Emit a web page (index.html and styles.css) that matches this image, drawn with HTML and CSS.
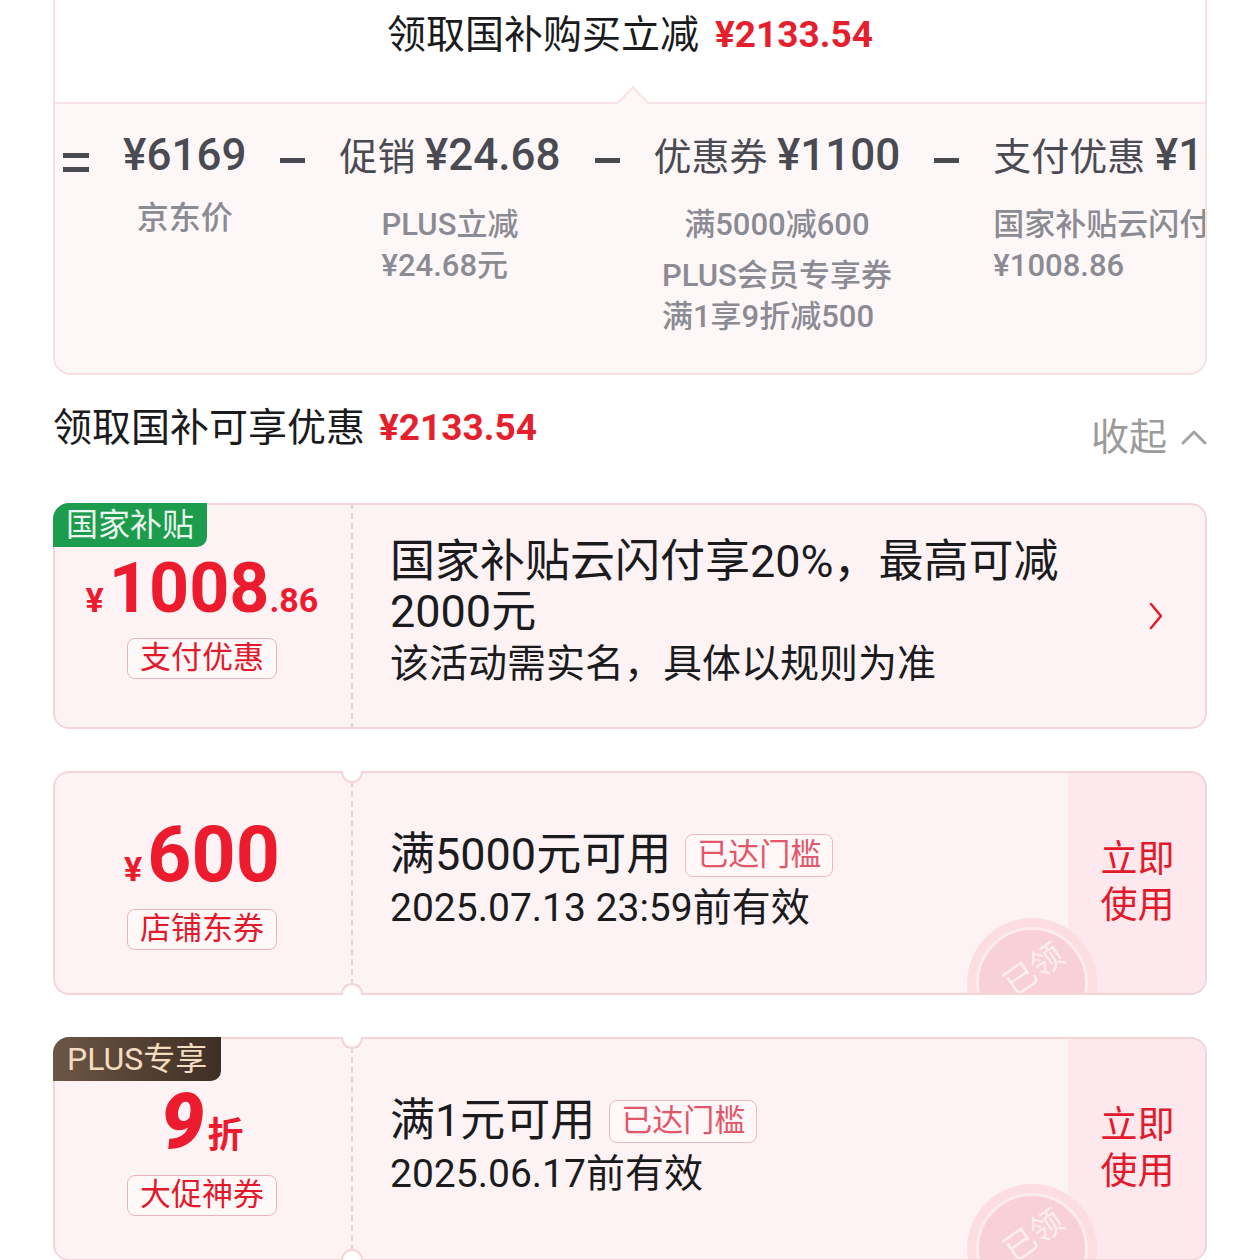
FILE: index.html
```html
<!DOCTYPE html>
<html lang="zh-CN">
<head>
<meta charset="utf-8">
<title>国补优惠</title>
<link rel="stylesheet" href="styles.css">
</head>
<body>
<div class="page">
  <section class="summary">
    <div class="summary-head">
      <span class="summary-title">领取国补购买立减</span>
      <span class="price-red">¥2133.54</span>
    </div>
    <div class="summary-body">
      <div class="formula-clip">
        <div class="formula">
          <div class="op op-eq"></div>
          <div class="fitem">
            <div class="famt"><span class="fnum">¥6169</span></div>
            <div class="fdesc"><div class="fblock fblock-lg">京东价</div></div>
          </div>
          <div class="op op-minus"></div>
          <div class="fitem">
            <div class="famt"><span class="flabel">促销</span> <span class="fnum">¥24.68</span></div>
            <div class="fdesc"><div class="fblock">PLUS立减<br>¥24.68元</div></div>
          </div>
          <div class="op op-minus"></div>
          <div class="fitem">
            <div class="famt"><span class="flabel">优惠券</span> <span class="fnum">¥1100</span></div>
            <div class="fdesc">
              <div class="fblock">满5000减600</div>
              <div class="fblock">PLUS会员专享券<br>满1享9折减500</div>
            </div>
          </div>
          <div class="op op-minus"></div>
          <div class="fitem fitem-left">
            <div class="famt"><span class="flabel">支付优惠</span> <span class="fnum">¥1008.86</span></div>
            <div class="fdesc"><div class="fblock">国家补贴云闪付享20%<br>¥1008.86</div></div>
          </div>
        </div>
      </div>
    </div>
  </section>

  <div class="sec-head">
    <div class="sec-title"><span class="t">领取国补可享优惠</span><span class="price-red">¥2133.54</span></div>
    <div class="fold">收起<svg width="26" height="16" viewBox="0 0 26 16"><path d="M2 14 L13 3 L24 14" stroke="#a3a3a3" stroke-width="3" fill="none" stroke-linecap="round" stroke-linejoin="round"/></svg></div>
  </div>

  <div class="cards">
    <div class="card card-tall">
      <div class="badge badge-green">国家补贴</div>
      <div class="c-left">
        <div class="amt"><span class="cur">¥</span><span class="int int-70">1008</span><span class="dec">.86</span></div>
        <div class="ctag">支付优惠</div>
      </div>
      <div class="c-main c-main-1">
        <div class="c1-title">国家补贴云闪付享20%，最高可减2000元</div>
        <div class="c1-sub">该活动需实名，具体以规则为准</div>
      </div>
      <div class="go"><svg width="14" height="28" viewBox="0 0 14 28"><path d="M2 2 L12 14 L2 26" stroke="#e3192c" stroke-width="2.5" fill="none" stroke-linecap="round" stroke-linejoin="round"/></svg></div>
    </div>

    <div class="card">
      <span class="notch notch-top"></span>
      <span class="notch notch-bottom"></span>
      <div class="c-left">
        <div class="amt"><span class="cur">¥</span><span class="int">600</span></div>
        <div class="ctag">店铺东券</div>
      </div>
      <div class="c-main c-main-2">
        <div class="ct-row"><span class="ct-title">满5000元可用</span><span class="reach">已达门槛</span></div>
        <div class="ct-date">2025.07.13 23:59前有效</div>
      </div>
      <div class="strip"><div class="strip-text">立即使用</div></div>
      <div class="stamp"><div class="stamp-in"><span>已领</span></div></div>
    </div>

    <div class="card">
      <span class="notch notch-top"></span>
      <span class="notch notch-bottom"></span>
      <div class="badge badge-plus">PLUS专享</div>
      <div class="c-left">
        <div class="amt disc"><span class="num">9</span><span class="unit">折</span></div>
        <div class="ctag ctag-disc">大促神券</div>
      </div>
      <div class="c-main c-main-2">
        <div class="ct-row"><span class="ct-title">满1元可用</span><span class="reach">已达门槛</span></div>
        <div class="ct-date">2025.06.17前有效</div>
      </div>
      <div class="strip"><div class="strip-text">立即使用</div></div>
      <div class="stamp"><div class="stamp-in"><span>已领</span></div></div>
    </div>
  </div>
</div>
</body>
</html>
```

FILE: styles.css
```css
* { box-sizing: border-box; margin: 0; padding: 0; }
html, body { width: 1260px; height: 1260px; overflow: hidden; background: #fff; }
body { font-family: "Roboto", "Noto Sans CJK SC", sans-serif; color: #1b1b1d; }
.page { padding: 0 53px; }

/* summary card */
.summary { border: 2px solid #f8dfe3; border-top: 0; border-radius: 0 0 18px 18px; background: #fff; }
.summary-head { height: 102px; display: flex; justify-content: center; gap: 16px; padding-top: 10px; line-height: 50px; }
.summary-title { font-size: 39px; color: #1b1b1d; }
.price-red { font-size: 37px; font-weight: 700; color: #e61f2f; }
.summary-body { position: relative; height: 271px; border-top: 2px solid #f8e3e6; background: #fdf7f8; border-radius: 0 0 16px 16px; }
.summary-body::before { content: ""; position: absolute; top: -13px; left: 566px; width: 22px; height: 22px; background: #fdf7f8; border-top: 2px solid #f8e3e6; border-left: 2px solid #f8e3e6; transform: rotate(45deg); }
.formula-clip { position: relative; overflow: hidden; height: 100%; border-radius: 0 0 16px 16px; }
.formula { display: flex; align-items: flex-start; gap: 34px; padding: 23px 0 0 8px; white-space: nowrap; }
.op { flex-shrink: 0; }
.op-eq { width: 26px; height: 19px; margin-top: 26px; border-top: 5px solid #4a4a52; border-bottom: 5px solid #4a4a52; }
.op-minus { width: 25px; height: 5px; margin-top: 31px; background: #4a4a52; }
.fitem { flex-shrink: 0; display: flex; flex-direction: column; align-items: center; }
.fitem-left { align-items: flex-start; }
.famt { font-size: 38px; line-height: 56px; color: #4a4a52; white-space: nowrap; }
.flabel { font-size: 38px; }
.fnum { font-size: 44px; font-weight: 500; }
.fdesc { margin-top: 19px; display: flex; flex-direction: column; align-items: center; gap: 10px; }
.fitem-left .fdesc { align-items: flex-start; }
.fblock { font-size: 31px; font-weight: 500; line-height: 41px; color: #8b8b93; text-align: left; }
.fblock-lg { font-size: 32px; margin-top: -6px; }

/* section head */
.sec-head { display: flex; justify-content: space-between; align-items: flex-start; margin-top: 25px; height: 56px; }
.sec-title { display: flex; gap: 14px; line-height: 56px; }
.sec-title .t { font-size: 39px; }
.fold { display: flex; align-items: center; gap: 14px; margin-top: 9px; font-size: 38px; line-height: 56px; color: #9b9b9b; }

/* coupon cards */
.cards { display: flex; flex-direction: column; gap: 42px; margin-top: 47px; }
.card { position: relative; display: flex; height: 224px; border-radius: 16px; overflow: hidden; background: #fdf3f5; }
.card-tall { height: 226px; }
.card::after { content: ""; position: absolute; inset: 0; border: 2px solid #f6d3d9; border-radius: 16px; pointer-events: none; z-index: 2; }
.notch { position: absolute; left: 288px; width: 22px; height: 12px; background: #fff; border: 2px solid #f6d3d9; z-index: 3; }
.notch-top { top: 0; border-top: 0; border-radius: 0 0 11px 11px; }
.notch-bottom { bottom: 0; border-bottom: 0; border-radius: 11px 11px 0 0; }

.badge { position: absolute; top: 0; left: 0; z-index: 3; height: 44px; padding: 0 13px; font-size: 32px; line-height: 44px; border-radius: 0 0 10px 0; }
.badge-green { background: #1c9c4c; color: #eaf7ee; }
.badge-plus { padding: 0 14px; background: linear-gradient(90deg, #6d5645, #3e2e24); color: #f4dcc0; }

.c-left { width: 298px; flex-shrink: 0; display: flex; flex-direction: column; align-items: center; justify-content: center; }
.amt { display: flex; align-items: baseline; color: #ec1b2e; font-weight: 700; line-height: 1; }
.amt .cur { font-size: 34px; margin-right: 5px; }
.amt .int { font-size: 77px; }
.amt .int-70 { font-size: 70px; }
.amt .dec { font-size: 34px; }
.disc .num { font-size: 78px; font-style: italic; font-weight: 900; }
.disc .unit { font-size: 36px; margin-left: 3px; }
.ctag { margin-top: 15px; height: 41px; padding: 0 12px; border: 1.5px solid #ebb4bc; border-radius: 8px; font-size: 31px; line-height: 38px; color: #e3192c; background: #fff8f9; }
.ctag-disc { margin-top: 14px; }

.c-main { flex: 1; min-width: 0; border-left: 2px dashed #f0cdd3; padding-left: 37px; display: flex; flex-direction: column; justify-content: center; }
.c-main-1 { padding-bottom: 8px; }
.c-main-2 { padding-bottom: 6px; }
.c1-title { font-size: 45px; line-height: 50px; max-width: 712px; }
.c1-sub { font-size: 39px; line-height: 46px; margin-top: 4px; }
.go { width: 102px; flex-shrink: 0; display: flex; align-items: center; justify-content: center; }

.ct-row { display: flex; align-items: center; gap: 14px; }
.ct-title { font-size: 45px; line-height: 54px; }
.reach { height: 43px; padding: 0 11px; border: 1.5px solid #f0b9c1; border-radius: 8px; font-size: 31px; line-height: 40px; color: #e2566a; background: #fff7f8; }
.ct-date { font-size: 39px; line-height: 48px; margin-top: 2px; }

.strip { width: 139px; flex-shrink: 0; background: #fde8ed; display: flex; align-items: center; justify-content: center; }
.strip-text { width: 2.1em; font-size: 37px; line-height: 46px; color: #e3192c; text-align: center; }

.stamp { position: absolute; left: 914px; top: 147px; width: 130px; height: 130px; border-radius: 50%; background: #fbdde2; display: flex; align-items: center; justify-content: center; z-index: 1; }
.stamp-in { width: 112px; height: 112px; border-radius: 50%; background: #f8d0d7; border: 3px solid #fdecef; display: flex; align-items: center; justify-content: center; }
.stamp-in span { display: inline-block; font-size: 32px; color: #fdeef0; transform: translateY(-16px) rotate(-35deg); }
```
